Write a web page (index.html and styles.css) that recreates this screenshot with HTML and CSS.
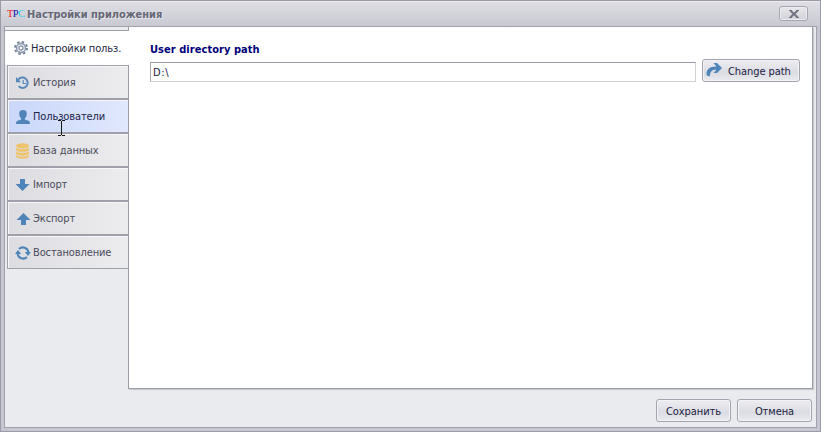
FILE: index.html
```
<!DOCTYPE html>
<html lang="ru">
<head>
<meta charset="utf-8">
<title>Настройки приложения</title>
<link rel="stylesheet" href="styles.css">
</head>
<body>
<div class="window">
  <header class="titlebar">
    <span class="logo"><b class="t">T</b><b class="p">P</b><b class="c">C</b></span>
    <h1>Настройки приложения</h1>
    <button class="close" aria-label="Закрыть"><svg width="10" height="8" viewBox="0 0 10 8"><path d="M1.500.8l7 6.400M8.500.8l-7 6.400" fill="none" stroke="#757783" stroke-width="2.200"/><path d="M0 .5h3M7 .5h3M0 7.500h3M7 7.500h3" stroke="#757783"/></svg></button>
  </header>
  <div class="client">
    <div class="body">
      <nav class="tabs">
        <a class="tab active"><svg width="16" height="16" viewBox="0 0 16 16"><circle cx="8" cy="8" r="6" fill="none" stroke="#76839a" stroke-width="1.900" stroke-dasharray="2.500 2.210"/><circle cx="8" cy="8" r="4.500" fill="#dfe6f0" stroke="#8995aa" stroke-width="1.300"/><circle cx="8" cy="8" r="2.100" fill="#fff" stroke="#66748c"/></svg><span>Настройки польз.</span></a>
        <a class="tab"><svg width="16" height="16" viewBox="0 0 16 16"><path d="M3.200 4.800A5.200 5.200 0 1 1 3.600 11.200" fill="none" stroke="#5689bb" stroke-width="2"/><path d="M1 2v5.200h5.200z" fill="#5689bb"/><path d="M8.200 5v3.500H11" fill="none" stroke="#5689bb" stroke-width="1.200"/></svg><span>История</span></a>
        <a class="tab hover"><svg width="16" height="16" viewBox="0 0 16 16"><path d="M4.200 4.800C4.200 2 5.800 1 8 1s3.800 1 3.800 3.800c0 2.100-.9 3.800-2 4.600v1.100l3.700 1.300c1 .4 1.500 1.200 1.500 3.200H1c0-2 .5-2.800 1.500-3.200l3.700-1.300V9.400c-1.100-.8-2-2.500-2-4.600z" fill="#5084b8"/></svg><span>Пользователи</span></a>
        <a class="tab"><svg width="16" height="16" viewBox="0 0 16 16"><g fill="#efc36b"><ellipse cx="7.500" cy="2.800" rx="6.500" ry="2.600"/><path d="M1 4.500c2 2 11 2 13 0v2.400c-1 2.600-12 2.600-13 0zM1 8.300c2 2 11 2 13 0v2.400c-1 2.600-12 2.600-13 0zM1 12.100c2 2 11 2 13 0v1.700c-1 2.600-12 2.600-13 0z"/></g></svg><span>База данных</span></a>
        <a class="tab"><svg width="16" height="16" viewBox="0 0 16 16"><path d="M5 2h5v5h4.500L7.500 14 .5 7H5z" fill="#4d84b9"/></svg><span>Імпорт</span></a>
        <a class="tab"><svg width="16" height="16" viewBox="0 0 16 16"><path d="M6 14h5V9h4.500L8.500 2l-7 7H6z" fill="#4d84b9"/></svg><span>Экспорт</span></a>
        <a class="tab"><svg width="16" height="16" viewBox="0 0 16 16"><path d="M4 4A5.600 5.600 0 0 1 13.400 7M12 12A5.600 5.600 0 0 1 2.600 9" fill="none" stroke="#4d84b9" stroke-width="2"/><path d="M9.800 7H16l-3 4zM0 9h6.200L3 5z" fill="#4d84b9"/></svg><span>Востановление</span></a>
      </nav>
      <main class="panel">
        <h2>User directory path</h2>
        <div class="row">
          <div class="field">D:\</div>
          <button class="btn change"><svg width="16" height="16" viewBox="0 0 16 16"><path d="M7.500 0H11l5 5-5 5H7.500l3-3.200C6.500 6 3.800 8.500 3.800 13.500L.8 12.500C-.6 7 3.500 3.200 10.500 3.500z" fill="#4d84b9"/></svg><span>Change path</span></button>
        </div>
      </main>
    </div>
    <footer class="actions">
      <button class="btn">Сохранить</button>
      <button class="btn">Отмена</button>
    </footer>
  </div>
  <svg class="cursor" width="7" height="16" viewBox="0 0 7 16"><path d="M0 .5h3M4 .5h3M3.500 1v14M0 15.500h3M4 15.500h3" stroke="#161616" fill="none"/></svg>
</div>
</body>
</html>
```
FILE: styles.css
```
* { box-sizing: border-box; }
body { margin: 0; font: 11px/14px "DejaVu Sans Condensed", "DejaVu Sans", sans-serif; font-stretch: condensed; color: #20223f; }
span { white-space: nowrap; }
.window { position: relative; width: 821px; height: 432px; padding: 0 3px 3px; border: 1px solid #9b9ba8; background: #c6c6d0; display: flex; flex-direction: column; }
.titlebar { height: 25px; flex: none; margin: 0 -3px; padding: 0 12px 0 6px; display: flex; align-items: center; background: linear-gradient(#dedee4, #c9c9d2); border-top: 1px solid #e9e9ee; }
.logo { width: 20px; flex: none; font: 10.5px/12px "Liberation Serif", serif; letter-spacing: -.6px; }
.logo b { font-weight: 400; }
.t { color: #f01822; }
.p { color: #0a12a8; }
.c { color: #2fd3f2; }
h1 { margin: 1px auto 0 0; font-size: 11px; line-height: 14px; font-weight: 700; color: #666875; letter-spacing: -.04px; white-space: nowrap; text-shadow: 1px 1px #e6e6ec; }
.close { width: 29px; height: 15px; margin-top: -1px; padding: 0; border: 1px solid #a5a6b1; border-radius: 3px; background: linear-gradient(#e7e7eb, #d2d2d9); display: flex; align-items: center; justify-content: center; box-shadow: inset 0 0 0 1px #ececf0; }
.client { flex: 1; border: 1px solid #a1a1ab; background: #eaebef; display: flex; flex-direction: column; min-height: 0; }
.body { display: flex; height: 362px; flex: none; }
.tabs { width: 123px; padding-top: 3px; flex: none; position: relative; z-index: 1; }
.tab { height: 34px; margin-left: 2px; border: solid #a0a0aa; border-width: 1px 0 1px 1px; display: flex; align-items: center; gap: 2px; padding: 2px 0 0 7px; color: #4b4c5b; letter-spacing: -.12px; background: linear-gradient(90deg, #dddde1, #ececef); box-shadow: inset 1px 1px #f7f7f9; }
.tab svg { flex: none; }
.active { height: 35px; margin: 0 -1px 0 0; padding: 1px 0 0 8px; border-width: 1px 0 0; background: #fff; color: #242642; box-shadow: none; }
.active svg { margin-top: -2px; }
.hover { background: linear-gradient(90deg, #cad7fa, #e0e8fd); color: #20234a; }
.panel { width: 685px; border: 1px solid #9c9ca7; border-top: 0; background: #fff; padding: 16px 12px 0 21px; box-shadow: 1px 1px 1px #c9cad1; }
h2 { margin: 0 0 5px; font-size: 11px; line-height: 14px; color: #000078; font-weight: 700; letter-spacing: .05px; }
.row { display: flex; align-items: flex-start; }
.field { width: 546px; height: 20px; margin-right: 6px; border: 1px solid #d0d1d7; border-top-color: #999aa3; border-left-color: #a9aab2; padding: 3px 3px 0 2px; letter-spacing: .7px; }
.btn { height: 23px; width: 75px; padding: 2px 0 0; border: 1px solid #a3a4af; border-radius: 3px; color: #20223f; font: inherit; font-stretch: condensed; letter-spacing: -.07px; display: flex; align-items: center; justify-content: center; background: linear-gradient(#ececf0, #dcdde4 60%, #eaebef); box-shadow: inset 0 0 0 1px #f2f3f6; }
.change { width: 98px; margin-top: -3px; justify-content: flex-start; gap: 6px; padding-left: 3px; }
.change svg { margin-top: -2px; }
.actions { display: flex; justify-content: flex-end; gap: 6px; padding: 10px 4px 0 0; }
.cursor { position: absolute; z-index: 2; left: 57px; top: 119px; }
```
